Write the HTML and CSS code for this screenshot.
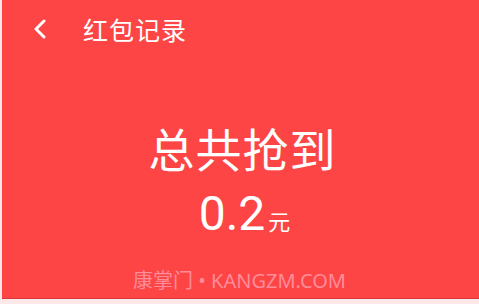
FILE: index.html
```html
<!DOCTYPE html>
<html lang="zh-CN">
<head>
    <meta charset="UTF-8">
    <meta name="viewport" content="width=device-width, initial-scale=1.0">
    <title>红包记录</title>
    <link rel="stylesheet" href="styles.css">
</head>
<body>
    <div class="page">
        <div class="topbar">
            <span class="back">
                <svg width="16" height="20" viewBox="0 0 16 20">
                    <path d="M12 2 L4 10 L12 18" fill="none" stroke="#fff" stroke-width="3" stroke-linecap="round" stroke-linejoin="round"/>
                </svg>
            </span>
            <span class="title">红包记录</span>
        </div>

        <div class="summary">
            <div class="label">总共抢到</div>
            <div class="amount">0.2<span class="unit">元</span></div>
        </div>

        <div class="watermark">康掌门 • KANGZM.COM</div>
    </div>
</body>
</html>
```

FILE: styles.css
```css
/* General body styling */
body {
    margin: 0;
    background-color: #fbe9e9;
    font-family: "Noto Sans", "Noto Sans CJK SC", sans-serif;
}

/* Red page area */
.page {
    width: 477px;
    height: 298px;
    margin-left: 2px;
    background-color: #fd4545;
    border-bottom: 1px solid #d83a3a;
    color: #fff;
    display: flex;
    flex-direction: column;
}

/* Header bar */
.topbar {
    height: 58px;
    display: flex;
    align-items: center;
    padding-left: 30px;
}

.back {
    display: flex;
    width: 16px;
    height: 20px;
    margin-right: 35px;
}

.title {
    font-size: 25px;
    letter-spacing: 1px;
}

/* Total amount */
.summary {
    margin-top: 63px;
    text-align: center;
}

.label {
    font-size: 46px;
    line-height: 56px;
    letter-spacing: 1px;
    padding-left: 4px;
}

.amount {
    font-family: "Roboto", sans-serif;
    font-size: 48px;
    line-height: 54px;
    margin-top: 10px;
    padding-left: 8px;
}

.unit {
    font-family: "Noto Sans CJK SC", sans-serif;
    font-size: 22px;
    margin-left: 3px;
}

/* Watermark */
.watermark {
    margin-top: auto;
    margin-bottom: 4px;
    text-align: center;
    padding-right: 2px;
    font-size: 20px;
    color: #ff8c9a;
}
```
